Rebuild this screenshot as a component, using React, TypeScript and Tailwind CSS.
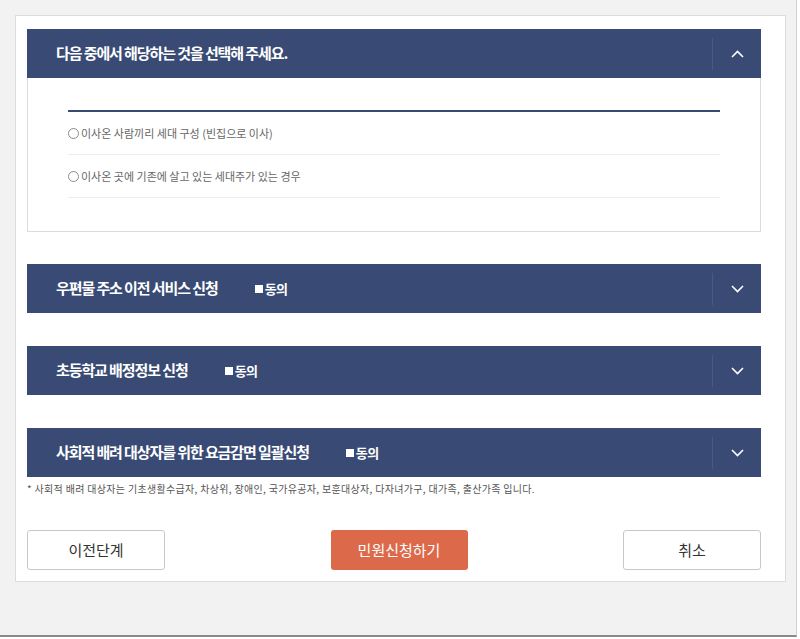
import React, { useState } from 'react';

// Chevron drawn as a thin white stroke
const Chevron: React.FC<{ up?: boolean }> = ({ up }) => (
  <svg width="13" height="8" viewBox="0 0 13 8" fill="none">
    {up ? (
      <path d="M1 7L6.5 1.5L12 7" stroke="#ffffff" strokeWidth="1.6" />
    ) : (
      <path d="M1 1L6.5 6.5L12 1" stroke="#ffffff" strokeWidth="1.6" />
    )}
  </svg>
);

interface HeaderProps {
  title: string;
  open?: boolean;
  agree?: boolean;
}

const SectionHeader: React.FC<HeaderProps> = ({ title, open, agree }) => (
  <div className="flex h-[49px] items-center bg-[#394b75] text-white">
    <div className="flex flex-1 items-center pl-[29px]">
      <span className="text-[15px] font-bold tracking-[-1.1px]">{title}</span>
      {agree && (
        <span className="ml-[37px] flex items-center text-[13px] font-bold tracking-[-0.5px]">
          <span className="mr-[2px] inline-block h-[8px] w-[8px] bg-white" />
          동의
        </span>
      )}
    </div>
    <div className="flex h-[32px] w-[49px] items-center justify-center border-l border-[#4a5a82]">
      <Chevron up={open} />
    </div>
  </div>
);

const options = [
  '이사온 사람끼리 세대 구성 (빈집으로 이사)',
  '이사온 곳에 기존에 살고 있는 세대주가 있는 경우',
];

export default function App() {
  const [selected, setSelected] = useState<number | null>(null);

  return (
    <div className="h-[639px] w-[800px] overflow-hidden bg-white font-[family-name:'Noto_Sans_CJK_KR',sans-serif]">
      <div className="h-[637px] w-[797px] border-b-2 border-r border-b-[#8a8a8a] border-r-[#d0d0d0] bg-[#f2f2f2] pl-[15px] pt-[15px]">
        <div className="w-[771px] border border-[#dcdcdc] bg-white pb-[11px] pl-[11px] pr-[24px] pt-[13px]">
          {/* section 1 */}
          <div>
            <SectionHeader title="다음 중에서 해당하는 것을 선택해 주세요." open />
            <div className="border border-t-0 border-[#dcdcdc] px-[40px] pb-[33px] pt-[32px]">
              <div className="h-[2px] bg-[#394b75]" />
              {options.map((opt, i) => (
                <label
                  key={i}
                  className="flex h-[43px] cursor-pointer items-center border-b border-[#ececec] text-[11px] text-[#666]"
                  onClick={() => setSelected(i)}
                >
                  <span className="mr-[2px] inline-flex h-[11px] w-[11px] items-center justify-center rounded-full border border-[#8c8c8c]">
                    {selected === i && <span className="h-[5px] w-[5px] rounded-full bg-[#555]" />}
                  </span>
                  {opt}
                </label>
              ))}
            </div>
          </div>

          <div className="mt-[32px]">
            <SectionHeader title="우편물 주소 이전 서비스 신청" agree />
          </div>
          <div className="mt-[33px]">
            <SectionHeader title="초등학교 배정정보 신청" agree />
          </div>
          <div className="mt-[33px]">
            <SectionHeader title="사회적 배려 대상자를 위한 요금감면 일괄신청" agree />
          </div>

          <p className="mt-[5px] text-[10px] leading-[14px] tracking-[0.32px] text-[#555]">
            * 사회적 배려 대상자는 기초생활수급자, 차상위, 장애인, 국가유공자, 보훈대상자, 다자녀가구, 대가족, 출산가족 입니다.
          </p>

          <div className="mt-[34px] flex items-center justify-between">
            <button className="h-[40px] w-[138px] rounded-[3px] border border-[#c8c8c8] bg-white text-[15px] text-[#333]">
              이전단계
            </button>
            <button className="ml-[10px] h-[40px] w-[137px] rounded-[3px] bg-[#dc6a4a] text-[15px] text-white">
              민원신청하기
            </button>
            <button className="h-[40px] w-[138px] rounded-[3px] border border-[#c8c8c8] bg-white text-[15px] text-[#333]">
              취소
            </button>
          </div>
        </div>
      </div>
    </div>
  );
}
